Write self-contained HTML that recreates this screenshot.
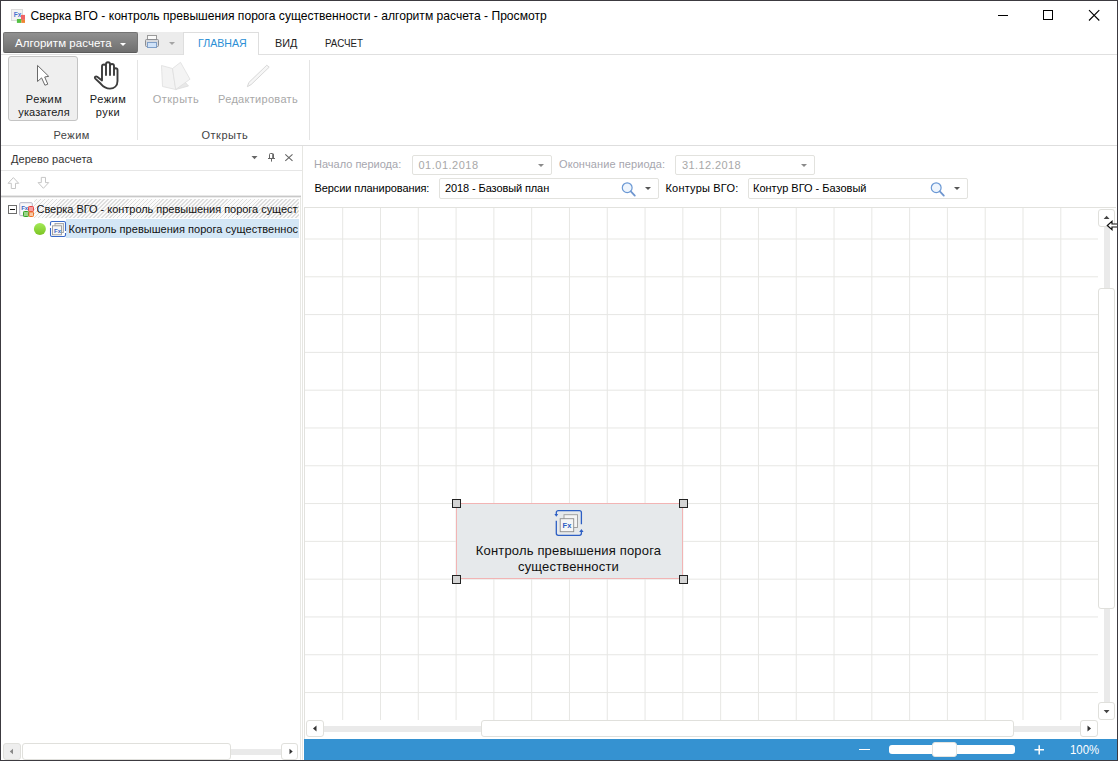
<!DOCTYPE html>
<html lang="ru">
<head>
<meta charset="utf-8">
<title>Сверка ВГО - контроль превышения порога существенности - алгоритм расчета - Просмотр</title>
<style>
html,body{margin:0;padding:0;}
body{width:1118px;height:761px;overflow:hidden;background:#fff;font-family:"Liberation Sans",sans-serif;font-size:11px;color:#000;position:relative;}
.abs,.t{position:absolute;}
.t{white-space:nowrap;line-height:14px;transform-origin:0 50%;}
#win{position:absolute;left:0;top:0;width:1118px;height:761px;border:1px solid #3c3a40;box-sizing:border-box;z-index:50;pointer-events:none;}
#title{left:30.5px;top:9px;font-size:12.1px;color:#000;}
#appbtn{left:3px;top:32px;width:135px;height:21px;border-radius:2px;background:linear-gradient(#909090,#6f6f6f);border:1px solid #747474;border-bottom-color:#5c5c5c;box-sizing:border-box;}
#appbtn span{position:absolute;left:11px;top:3px;color:#fff;font-size:11.5px;letter-spacing:0.05px;line-height:14px;white-space:nowrap;}
#qat{left:138px;top:32px;width:46px;height:22px;background:#ececec;}
#tabmain{left:183px;top:32px;width:76px;height:23px;background:#fff;border:1px solid #dedede;border-bottom:none;box-sizing:border-box;}
#ribline{left:1px;top:54px;width:1116px;height:1px;background:#e0e0e0;}
#ribbot{left:1px;top:145px;width:1116px;height:1px;background:#dedede;}
.sep{width:1px;background:#e4e4e4;top:60px;height:80px;}
#selbtn{left:8px;top:56px;width:70px;height:65px;border:1px solid #c4c4c4;border-radius:3px;background:#efefef;box-sizing:border-box;}
.rl{font-size:11px;text-align:center;color:#1a1a1a;line-height:13px;letter-spacing:0.5px;}
.dis{color:#a8a8a8;}
.grp{color:#444;font-size:11px;letter-spacing:0.5px;}
#split{left:302px;top:146px;width:1px;height:614px;background:#e6e6e2;}
#lphead{left:11px;top:152px;font-size:11px;color:#333;letter-spacing:0.05px;}
#lpline1{left:1px;top:170px;width:301px;height:1px;background:#e6e6e6;}
#lpline2{left:1px;top:196px;width:300px;height:2px;background:#d4d4d4;}
#lpedge{left:300px;top:197px;width:1px;height:563px;background:#e8e8e4;}
#row1{left:34px;top:199px;width:265px;height:19px;background:repeating-linear-gradient(135deg,#fbfbfb 0,#fbfbfb 1.6px,#dedede 1.6px,#dedede 2.8px);}
#row2{left:66px;top:219px;width:233px;height:19px;background:#d4e7f6;}
.tree{font-size:11px;color:#111;letter-spacing:-0.03px;}
.lbl{font-size:11px;}
.inp{border:1px solid #e2e2de;border-radius:2px;background:#fff;box-sizing:border-box;height:20px;}
.inp span{position:absolute;left:5px;top:3px;font-size:11px;line-height:13px;white-space:nowrap;}
.arr{width:0;height:0;border-left:3px solid transparent;border-right:3px solid transparent;border-top:3px solid #555;}
#cvtop{left:304px;top:207px;width:812px;height:1px;background:#e2e2de;}
#cvleft{left:304px;top:207px;width:1px;height:553px;background:#e2e2de;}
#node{left:456px;top:503px;width:227px;height:76px;background:#e6e9eb;border:1px solid #f2b4b4;box-sizing:border-box;}
.hd{width:9px;height:9px;border:1px solid #222;background:#d4d4d4;box-sizing:border-box;}
#nodetxt{left:455px;top:543px;width:227px;text-align:center;font-size:13px;line-height:16px;color:#111;white-space:normal;letter-spacing:0.17px;}
.sbthumb{background:#fff;border:1px solid #e0e0dc;border-radius:3px;box-sizing:border-box;}
.sbbtn{background:#fff;border:1px solid #e0e0dc;border-radius:3px;box-sizing:border-box;}
.trk{background:#eaeaea;}
#status{left:304px;top:739px;width:813px;height:21px;background:#3592d1;}
</style>
</head>
<body>
<div id="win"></div>

<!-- title bar -->
<svg class="abs" style="left:10px;top:8px" width="16" height="16" viewBox="0 0 16 16">
  <rect x="1.500" y="1.500" width="11" height="11" fill="#f3f3f3" stroke="#dcdcdc"/>
  <text x="3.800" y="8.900" font-family="Liberation Sans, sans-serif" font-size="6.500" font-weight="bold" fill="#4a74d0">Fx</text>
  <rect x="11" y="6.900" width="4" height="5" fill="#f06464"/>
  <rect x="6.900" y="11" width="4.500" height="3.900" fill="#54c044"/>
  <rect x="11.400" y="11.900" width="3.600" height="3" fill="#f08434"/>
</svg>
<div id="title" class="t">Сверка ВГО - контроль превышения порога существенности - алгоритм расчета - Просмотр</div>
<svg class="abs" style="left:990px;top:5px" width="120" height="22" viewBox="0 0 120 22">
  <path d="M8 10.500h10" stroke="#000" stroke-width="1" fill="none"/>
  <rect x="53.500" y="5.500" width="9" height="9" stroke="#000" stroke-width="1" fill="none"/>
  <path d="M99 5.200l10.300 10.300M109.300 5.200l-10.300 10.300" stroke="#000" stroke-width="1.100" fill="none"/>
</svg>

<!-- menu row -->
<div id="qat" class="abs"></div>
<div id="ribline" class="abs"></div>
<div id="tabmain" class="abs"></div>
<div id="appbtn" class="abs"><span>Алгоритм расчета</span></div>
<div class="abs arr" style="left:120px;top:42.500px;border-top-color:#fff"></div>
<svg class="abs" style="left:144px;top:34px" width="17" height="16" viewBox="0 0 17 16">
  <rect x="3.500" y="1.500" width="9" height="5" fill="#fafafa" stroke="#9a9a9a"/>
  <rect x="1.500" y="5.500" width="13" height="7" rx="1" fill="#d8dade" stroke="#8c8e92"/>
  <rect x="3.500" y="8.500" width="9" height="5" fill="#cfe2f8" stroke="#7f9fc8"/>
</svg>
<div class="abs arr" style="left:168.500px;top:42px;border-top-color:#a4a4a4"></div>
<div class="t" id="tab1" style="left:197.500px;top:36px;color:#2c8fd6;font-size:11.5px;transform:scaleX(0.925)">ГЛАВНАЯ</div>
<div class="t" id="tab2" style="left:274.500px;top:36px;color:#222;font-size:11.5px;transform:scaleX(0.94)">ВИД</div>
<div class="t" id="tab3" style="left:325px;top:36px;color:#222;font-size:11.5px;transform:scaleX(0.85)">РАСЧЕТ</div>

<!-- ribbon -->
<div id="selbtn" class="abs"></div>
<svg class="abs" style="left:32px;top:62px" width="22" height="26" viewBox="0 0 22 26">
  <path d="M5.500 3.400 L5.500 19.500 L9.600 15.900 L12.900 23.200 L15.800 22.200 L12.700 15 L16.700 14.300 Z" fill="#fff" stroke="#6a6a6a" stroke-width="1" stroke-linejoin="round"/>
</svg>
<svg class="abs" style="left:92px;top:60px" width="28" height="32" viewBox="0 0 28 32">
  <path d="M10 20 V6.500 a2 2 0 0 1 4 0 V15 M14 6.500 V4.300 a2 2 0 0 1 4 0 V15 M18 6 a2 2 0 0 1 4 0 V15 M22 10 a1.750 1.750 0 0 1 3.500 0 V21 C25.500 26 22 28.600 18 28.600 C14 28.600 11.500 27 8.800 23.800 L3.300 18.600 C2 17.200 3.800 15.800 5.200 16.800 L10 20.500" fill="none" stroke="#3c3c3c" stroke-width="1.900" stroke-linecap="round" stroke-linejoin="round"/>
</svg>
<div class="t rl" id="rb1" style="left:9px;top:92.500px;width:70px">Режим<br><span style="letter-spacing:0.1px">указателя</span></div>
<div class="t rl" id="rb2" style="left:81px;top:92.500px;width:54px">Режим<br>руки</div>
<div class="t grp" id="g1" style="left:53.500px;top:128px">Режим</div>
<div class="abs sep" style="left:137px"></div>
<svg class="abs" style="left:158px;top:60px" width="34" height="32" viewBox="0 0 34 32">
  <path d="M17.700 29.500 L27 22 L30.500 26 Z" fill="#e8e8e8" stroke="#dcdcdc" stroke-width="0.800"/>
  <path d="M3.500 5.500 L14.500 8.500 L17.700 29.500 L4.500 26.500 Z" fill="#f3f3f3" stroke="#dedede" stroke-width="0.800"/>
  <path d="M14.500 8.500 L22.500 2.300 L32 19.200 L17.700 29.500 Z" fill="#f4f4f4" stroke="#dedede" stroke-width="0.800"/>
</svg>
<svg class="abs" style="left:243px;top:60px" width="30" height="32" viewBox="0 0 30 32">
  <path d="M23.800 5.200 L26.200 7.200 L8.200 24.500 L4.400 26.700 L5.800 22.500 Z" fill="#f6f6f6" stroke="#d8d8d8" stroke-linejoin="round"/>
</svg>
<div class="t rl dis" id="rb3" style="left:146px;top:92.500px;width:60px">Открыть</div>
<div class="t rl dis" id="rb4" style="left:212.500px;top:92.500px;width:91px;letter-spacing:0.3px">Редактировать</div>
<div class="t grp" id="g2" style="left:201.500px;top:128px">Открыть</div>
<div class="abs sep" style="left:309px"></div>
<div id="ribbot" class="abs"></div>

<!-- left panel -->
<div id="split" class="abs"></div>
<div class="t" id="lphead">Дерево расчета</div>
<svg class="abs" style="left:248px;top:150px" width="50" height="16" viewBox="0 0 50 16">
  <path d="M3.500 6 h6 l-3 3.200 z" fill="#666"/>
  <path d="M21.500 8 V4.500 a1 1 0 0 1 1 -1 h2 a1 1 0 0 1 1 1 V8" stroke="#666" stroke-width="1" fill="none"/>
  <path d="M25 4 V8" stroke="#666" stroke-width="1.600" fill="none"/>
  <path d="M20 8.500 h7 M23.500 9 v2.600" stroke="#666" stroke-width="1" fill="none"/>
  <path d="M37.300 4.300 l7.200 6.600 M44.500 4.300 l-7.200 6.600" stroke="#666" stroke-width="1.100" fill="none"/>
</svg>
<div id="lpline1" class="abs"></div>
<svg class="abs" style="left:6px;top:175px" width="50" height="16" viewBox="0 0 50 16">
  <path d="M7.400 2.600 l5.300 5.700 h-3.200 v5.200 h-4.200 v-5.200 h-3.200 z" fill="#fff" stroke="#c6c6c6"/>
  <path d="M37.400 13.300 l5.300 -5.700 h-3.200 v-5.200 h-4.200 v5.200 h-3.200 z" fill="#fff" stroke="#c6c6c6"/>
</svg>
<div class="abs" style="left:1px;top:195px;width:300px;height:1px;background:#e8e8e8"></div>
<div class="abs" style="left:1px;top:196px;width:300px;height:1px;background:#c8c8c8"></div>
<div class="abs" style="left:1px;top:197px;width:300px;height:1px;background:#ececec"></div>
<div id="lpedge" class="abs"></div>
<div id="row1" class="abs"></div>
<div id="row2" class="abs"></div>
<svg class="abs" style="left:7px;top:204px" width="11" height="11" viewBox="0 0 11 11">
  <rect x="1.500" y="1.500" width="8" height="8" fill="#fff" stroke="#6e6e6e"/>
  <path d="M3 5.500 h5" stroke="#111" stroke-width="1"/>
</svg>
<svg class="abs" style="left:19px;top:201px" width="17" height="17" viewBox="0 0 17 17">
  <rect x="0.700" y="1.700" width="12.600" height="13" rx="1" fill="#f8f8fa" stroke="#b4b4c4"/>
  <text x="2.200" y="8.700" font-family="Liberation Sans, sans-serif" font-size="6" font-weight="bold" fill="#3a66c4">Fx</text>
  <rect x="9.500" y="5.500" width="5" height="5" rx="0.800" fill="#f4a0a0" stroke="#e84444"/>
  <rect x="4.500" y="10.500" width="5" height="5" rx="0.800" fill="#98d488" stroke="#34a424"/>
  <rect x="10" y="11" width="4.500" height="4.500" rx="0.800" fill="#f8c8a8" stroke="#f07424"/>
</svg>
<div class="t tree" id="tr1" style="left:36.500px;top:202px;width:261px;overflow:hidden">Сверка ВГО - контроль превышения порога существенности</div>
<svg class="abs" style="left:33px;top:222px" width="14" height="14" viewBox="0 0 14 14">
  <defs><linearGradient id="gg" x1="0" y1="0" x2="0" y2="1"><stop offset="0" stop-color="#a4ea58"/><stop offset="1" stop-color="#7cc424"/></linearGradient></defs>
  <circle cx="6.900" cy="6.900" r="6" fill="url(#gg)"/>
</svg>
<svg class="abs" style="left:49px;top:220px" width="18" height="18" viewBox="0 0 18 18">
  <path d="M1.500 5.500 V3 a1.500 1.500 0 0 1 1.500 -1.500 H15 a1.500 1.500 0 0 1 1.500 1.500 V11" fill="none" stroke="#3a6ac8" stroke-width="1.100"/>
  <path d="M16.500 13 V15 a1.500 1.500 0 0 1 -1.500 1.500 H3 a1.500 1.500 0 0 1 -1.500 -1.500 V8" fill="none" stroke="#3a6ac8" stroke-width="1.100"/>
  <rect x="6" y="3.500" width="8.500" height="9" fill="#ececec" stroke="#a4a4a4" stroke-width="0.900"/>
  <rect x="3.500" y="5.800" width="9" height="9" fill="#f6f6f6" stroke="#9c9c9c" stroke-width="0.900"/>
  <text x="5" y="12.900" font-family="Liberation Sans, sans-serif" font-size="6" font-weight="bold" fill="#3a66c4">Fx</text>
</svg>
<div class="t tree" id="tr2" style="left:68.500px;top:222px;letter-spacing:0.03px;width:229.500px;overflow:hidden">Контроль превышения порога существенности</div>
<!-- left panel scrollbar -->
<div class="abs trk" style="left:230px;top:749px;width:52px;height:6px"></div>
<div class="abs sbbtn" style="left:3px;top:743px;width:18px;height:17px;background:#eeeeee"></div>
<div class="abs sbthumb" style="left:21.500px;top:743px;width:209px;height:17px"></div>
<div class="abs sbbtn" style="left:281px;top:743px;width:17px;height:17px"></div>
<svg class="abs" style="left:3px;top:743px" width="296" height="17" viewBox="0 0 296 17">
  <path d="M10 5.800 v5.400 l-3.200 -2.700 z" fill="#888"/>
  <path d="M286.500 5.800 v5.400 l3.200 -2.700 z" fill="#333"/>
</svg>

<!-- form -->
<div class="t lbl" id="f1" style="left:314px;top:157px;color:#a6a6ae">Начало периода:</div>
<div class="abs inp" style="left:412px;top:155px;width:140px"><span style="color:#a8a8a8;letter-spacing:0.5px;left:5.500px">01.01.2018</span></div>
<div class="abs arr" style="left:538px;top:163.500px;border-top-color:#8a8a8a"></div>
<div class="t lbl" id="f2" style="left:559px;top:157px;color:#a6a6ae;letter-spacing:0.08px">Окончание периода:</div>
<div class="abs inp" style="left:675px;top:155px;width:140px"><span style="color:#a8a8a8;letter-spacing:0.4px;left:6px">31.12.2018</span></div>
<div class="abs arr" style="left:800.500px;top:163.500px;border-top-color:#8a8a8a"></div>
<div class="t lbl" id="f3" style="left:314.500px;top:181px;letter-spacing:-0.08px">Версии планирования:</div>
<div class="abs inp" style="left:439px;top:178px;width:220px;height:21px"><span style="letter-spacing:-0.1px">2018 - Базовый план</span></div>
<div class="abs arr" style="left:644.500px;top:187px"></div>
<div class="t lbl" id="f4" style="left:665.500px;top:181px;letter-spacing:0.2px">Контуры ВГО:</div>
<div class="abs inp" style="left:748px;top:178px;width:220px;height:21px"><span style="left:4px">Контур ВГО - Базовый</span></div>
<div class="abs arr" style="left:953.500px;top:187px"></div>
<svg class="abs" style="left:620px;top:181px" width="17" height="17" viewBox="0 0 17 17">
  <circle cx="7.200" cy="6.700" r="4.900" fill="#eef5fd" stroke="#6a98d4" stroke-width="1.200"/>
  <path d="M10.800 10.400 l4 4.200" stroke="#6f96cf" stroke-width="1.800" stroke-linecap="round"/>
</svg>
<svg class="abs" style="left:929px;top:181px" width="17" height="17" viewBox="0 0 17 17">
  <circle cx="7.200" cy="6.700" r="4.900" fill="#eef5fd" stroke="#6a98d4" stroke-width="1.200"/>
  <path d="M10.800 10.400 l4 4.200" stroke="#6f96cf" stroke-width="1.800" stroke-linecap="round"/>
</svg>

<!-- canvas -->
<svg class="abs" id="grid" style="left:304px;top:207px" width="794" height="513" viewBox="0 0 794 513">
<g fill="#e7e7e4">
<rect x="38.19" y="1" width="1" height="512"/>
<rect x="75.99" y="1" width="1" height="512"/>
<rect x="113.78" y="1" width="1" height="512"/>
<rect x="151.58" y="1" width="1" height="512"/>
<rect x="189.38" y="1" width="1" height="512"/>
<rect x="227.17" y="1" width="1" height="512"/>
<rect x="264.96" y="1" width="1" height="512"/>
<rect x="302.76" y="1" width="1" height="512"/>
<rect x="340.56" y="1" width="1" height="512"/>
<rect x="378.35" y="1" width="1" height="512"/>
<rect x="416.14" y="1" width="1" height="512"/>
<rect x="453.94" y="1" width="1" height="512"/>
<rect x="491.74" y="1" width="1" height="512"/>
<rect x="529.53" y="1" width="1" height="512"/>
<rect x="567.33" y="1" width="1" height="512"/>
<rect x="605.12" y="1" width="1" height="512"/>
<rect x="642.91" y="1" width="1" height="512"/>
<rect x="680.71" y="1" width="1" height="512"/>
<rect x="718.50" y="1" width="1" height="512"/>
<rect x="756.30" y="1" width="1" height="512"/>
<rect x="1" y="31.50" width="793" height="1"/>
<rect x="1" y="69.29" width="793" height="1"/>
<rect x="1" y="107.08" width="793" height="1"/>
<rect x="1" y="144.88" width="793" height="1"/>
<rect x="1" y="182.68" width="793" height="1"/>
<rect x="1" y="220.47" width="793" height="1"/>
<rect x="1" y="258.26" width="793" height="1"/>
<rect x="1" y="296.06" width="793" height="1"/>
<rect x="1" y="333.86" width="793" height="1"/>
<rect x="1" y="371.65" width="793" height="1"/>
<rect x="1" y="409.44" width="793" height="1"/>
<rect x="1" y="447.24" width="793" height="1"/>
<rect x="1" y="485.04" width="793" height="1"/>
</g></svg>
<div id="cvtop" class="abs"></div>
<div id="cvleft" class="abs"></div>
<div id="node" class="abs"></div>
<div class="abs hd" style="left:452px;top:499px"></div>
<div class="abs hd" style="left:679px;top:499px"></div>
<div class="abs hd" style="left:452px;top:575px"></div>
<div class="abs hd" style="left:679px;top:575px"></div>
<svg class="abs" style="left:553px;top:508px" width="32" height="30" viewBox="0 0 32 30">
  <path d="M3.300 6.500 V4.600 a2 2 0 0 1 2 -2 H26.400 a2 2 0 0 1 2 2 V16.200" fill="none" stroke="#2d5fc4" stroke-width="1.300"/>
  <path d="M1.400 6 h3.800 l-1.900 2.800 z" fill="#2d5fc4"/>
  <path d="M3.300 12.700 V25.300 a2 2 0 0 0 2 2 H26.400 a2 2 0 0 0 2 -2 V23" fill="none" stroke="#2d5fc4" stroke-width="1.300"/>
  <path d="M26.200 24 h4.400 l-2.200 -3 z" fill="#2d5fc4"/>
  <rect x="11" y="6.700" width="13.500" height="12.800" fill="#f4f4f4" stroke="#9a9a9a" stroke-width="0.900"/>
  <rect x="7.200" y="10.700" width="13.500" height="13" fill="#f6f6f6" stroke="#8c8c8c" stroke-width="0.900"/>
  <text x="9.600" y="19.800" font-family="Liberation Sans, sans-serif" font-size="7.500" font-weight="bold" fill="#2d5fc4">Fx</text>
</svg>
<div class="t" id="nodetxt">Контроль превышения порога существенности</div>

<!-- canvas scrollbars -->
<div class="abs trk" style="left:1104px;top:226px;width:6px;height:478px"></div>
<div class="abs sbbtn" style="left:1098px;top:209px;width:17px;height:18px"></div>
<div class="abs sbthumb" style="left:1098px;top:288px;width:17px;height:321px"></div>
<div class="abs sbbtn" style="left:1098px;top:702px;width:17px;height:18px"></div>
<svg class="abs" style="left:1098px;top:209px" width="20" height="512" viewBox="0 0 20 512">
  <path d="M5.700 10 h5.800 l-2.900 -3.300 z" fill="#444"/>
  <path d="M5.700 501 h5.800 l-2.900 3.300 z" fill="#444"/>
  <path d="M19.500 15 H14 V12.400 L9.300 16.500 L14 20.600 V18 H19.500" fill="#fff" stroke="#111" stroke-width="1.200" stroke-linejoin="miter"/>
</svg>
<div class="abs trk" style="left:323px;top:726px;width:758px;height:6px"></div>
<div class="abs sbbtn" style="left:306px;top:720px;width:18px;height:17px"></div>
<div class="abs sbthumb" style="left:481px;top:720px;width:533px;height:17px"></div>
<div class="abs sbbtn" style="left:1080px;top:720px;width:18px;height:17px"></div>
<svg class="abs" style="left:306px;top:720px" width="792" height="17" viewBox="0 0 792 17">
  <path d="M10.500 5.500 v6 l-3.500 -3 z" fill="#333"/>
  <path d="M781.500 5.500 v6 l3.500 -3 z" fill="#333"/>
</svg>

<!-- status bar -->
<div id="status" class="abs"></div>
<div class="abs" style="left:859px;top:749px;width:11px;height:1px;background:#fff"></div>
<div class="abs" style="left:889px;top:745px;width:126px;height:9px;background:#fff;border-radius:3px"></div>
<div class="abs" style="left:932px;top:742px;width:25px;height:15px;background:#fff;border-radius:3px;border:1px solid #e4e4e0;box-sizing:border-box"></div>
<svg class="abs" style="left:1032px;top:743px" width="14" height="14" viewBox="0 0 14 14"><path d="M2.500 6.800 h9.500 M7.200 2.200 v9.300" stroke="#fff" stroke-width="1.500" fill="none"/></svg>
<div class="t" id="zoom" style="left:1070.300px;top:743px;color:#fff;font-size:12px;transform:scaleX(0.95)">100%</div>
</body>
</html>
